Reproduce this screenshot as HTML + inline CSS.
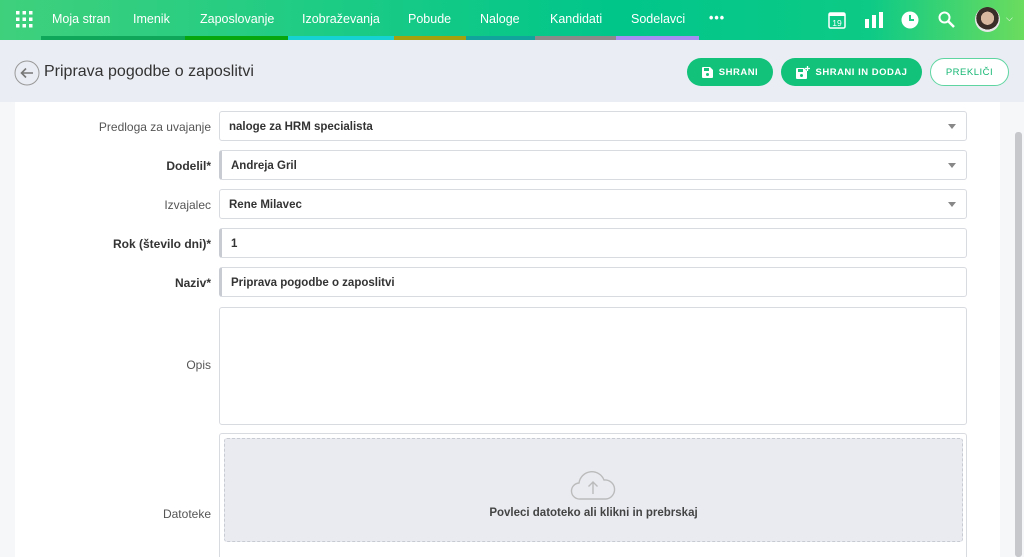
<!DOCTYPE html>
<html style="width:1024px;height:557px;overflow:hidden"><head><meta charset="utf-8"><style>
*{box-sizing:border-box;margin:0;padding:0}
body{width:1024px;height:557px;overflow:hidden;font-family:"Liberation Sans",sans-serif;background:#f6f7f9;position:relative}
.hdr{position:absolute;left:0;top:0;width:1024px;height:40px;background:linear-gradient(90deg,#3fd07c 0%,#1fcc84 30%,#00c68a 60%,#0dca86 85%,#6bdc5e 100%)}
.nav{position:absolute;top:12px;color:#fff;font-size:12.5px}
.ul{position:absolute;top:36px;height:4px}
.sub{position:absolute;left:0;top:40px;width:1024px;height:62px;background:#eaedf3}
.btn{position:absolute;top:58px;height:28px;border-radius:14px;background:#12c27a;color:#fff;font-size:9.5px;font-weight:bold;letter-spacing:.5px;display:flex;align-items:center;justify-content:center}
.main{position:absolute;left:15px;top:102px;width:985px;height:455px;background:#fff}
.lbl{position:absolute;right:813px;font-size:12px;color:#555;text-align:right}
.b{font-weight:bold;color:#333}
.fld{position:absolute;left:219px;width:748px;height:30px;border:1px solid #d8dbe0;border-radius:3px;font-size:11.5px;font-weight:bold;color:#333;padding:9px 9px 0}
.req{border-left:3px solid #c8ccd2}
.arr{position:absolute;right:10px;top:12px;width:0;height:0;border-left:4px solid transparent;border-right:4px solid transparent;border-top:5px solid #888}
</style></head><body>
<div class="hdr"></div>
<svg style="position:absolute;left:16px;top:11px" width="17" height="17"><g fill="#fff"><rect x="0" y="0" width="3.5" height="3.5"/><rect x="6.5" y="0" width="3.5" height="3.5"/><rect x="13" y="0" width="3.5" height="3.5"/><rect x="0" y="6.5" width="3.5" height="3.5"/><rect x="6.5" y="6.5" width="3.5" height="3.5"/><rect x="13" y="6.5" width="3.5" height="3.5"/><rect x="0" y="13" width="3.5" height="3.5"/><rect x="6.5" y="13" width="3.5" height="3.5"/><rect x="13" y="13" width="3.5" height="3.5"/></g></svg>
<div class="nav" style="left:52px">Moja stran</div>
<div class="nav" style="left:133px">Imenik</div>
<div class="nav" style="left:200px">Zaposlovanje</div>
<div class="nav" style="left:302px">Izobraževanja</div>
<div class="nav" style="left:408px">Pobude</div>
<div class="nav" style="left:480px">Naloge</div>
<div class="nav" style="left:550px">Kandidati</div>
<div class="nav" style="left:631px">Sodelavci</div>
<div class="nav" style="left:709px;top:11px;font-weight:bold;letter-spacing:1px">•••</div>
<div class="ul" style="left:41px;width:144px;background:#0fa85a"></div>
<div class="ul" style="left:185px;width:103px;background:#08a60e"></div>
<div class="ul" style="left:288px;width:106px;background:#17d2d2"></div>
<div class="ul" style="left:394px;width:72px;background:#a3a20e"></div>
<div class="ul" style="left:466px;width:69px;background:#10a49c"></div>
<div class="ul" style="left:535px;width:81px;background:#8a8a8a"></div>
<div class="ul" style="left:616px;width:83px;background:#a58ff5"></div>
<svg style="position:absolute;left:828px;top:11px" width="18" height="18"><rect x="1" y="2" width="16" height="15" rx="1.5" fill="none" stroke="#fff" stroke-width="1.5"/><rect x="1" y="2" width="16" height="3" fill="#fff"/><text x="9" y="15" font-size="8.5" fill="#fff" text-anchor="middle" font-family="Liberation Sans">19</text></svg>
<svg style="position:absolute;left:865px;top:12px" width="18" height="16"><g fill="#fff"><rect x="0" y="7" width="4" height="9"/><rect x="7" y="3" width="4" height="13"/><rect x="14" y="0" width="4" height="16"/></g></svg>
<svg style="position:absolute;left:901px;top:11px" width="18" height="18"><circle cx="9" cy="9" r="8.5" fill="#fff"/><path d="M9 4v5h4" stroke="#1fcc84" stroke-width="2" fill="none"/></svg>
<svg style="position:absolute;left:938px;top:11px" width="17" height="17"><circle cx="6.5" cy="6.5" r="5" stroke="#fff" stroke-width="2" fill="none"/><path d="M10 10l6 6" stroke="#fff" stroke-width="2.5"/></svg>
<div style="position:absolute;left:975px;top:7px;width:25px;height:25px;border-radius:50%;background:radial-gradient(circle at 50% 45%,#d9b8a0 0 35%,#3a2e28 36% 60%,#e8e8e8 61%)"></div>
<div style="position:absolute;left:1006px;top:13px;color:#fff;font-size:9px">⌵</div>
<div class="sub"></div>
<svg style="position:absolute;left:14px;top:60px" width="26" height="26"><circle cx="13" cy="13" r="12" fill="none" stroke="#999" stroke-width="1"/><path d="M19 13H8M12 8.5L7.5 13l4.5 4.5" stroke="#777" stroke-width="1.6" fill="none"/></svg>
<div style="position:absolute;left:44px;top:63px;font-size:16px;color:#333">Priprava pogodbe o zaposlitvi</div>
<div class="btn" style="left:687px;width:86px"><svg width="11" height="11" style="margin-right:6px"><path d="M0 1a1 1 0 011-1h7l3 3v7a1 1 0 01-1 1H1a1 1 0 01-1-1z" fill="#fff"/><rect x="2" y="1" width="5" height="3" fill="#12c27a"/><circle cx="5.5" cy="7.5" r="1.5" fill="#12c27a"/></svg>SHRANI</div>
<div class="btn" style="left:781px;width:141px"><svg width="14" height="13" style="margin-right:6px"><path d="M0 3a1 1 0 011-1h7l3 3v7a1 1 0 01-1 1H1a1 1 0 01-1-1z" fill="#fff"/><rect x="2" y="3" width="5" height="3" fill="#12c27a"/><circle cx="5.5" cy="9.5" r="1.5" fill="#12c27a"/><path d="M11.5 0v5M9 2.5h5" stroke="#fff" stroke-width="1.3"/></svg>SHRANI IN DODAJ</div>
<div class="btn" style="left:930px;width:79px;background:#fff;border:1.5px solid #5fd6a2;color:#17b774;font-weight:normal">PREKLIČI</div>
<div class="main"></div>
<div style="position:absolute;left:1015px;top:132px;width:7px;height:425px;background:#c6c8cc;border-radius:3px"></div>
<div class="lbl" style="top:120px">Predloga za uvajanje</div>
<div class="lbl b" style="top:159px">Dodelil*</div>
<div class="lbl" style="top:198px">Izvajalec</div>
<div class="lbl b" style="top:237px">Rok (število dni)*</div>
<div class="lbl b" style="top:276px">Naziv*</div>
<div class="lbl" style="top:358px">Opis</div>
<div class="lbl" style="top:507px">Datoteke</div>
<div class="fld" style="top:111px">naloge za HRM specialista<div class="arr"></div></div>
<div class="fld req" style="top:150px">Andreja Gril<div class="arr"></div></div>
<div class="fld" style="top:189px">Rene Milavec<div class="arr"></div></div>
<div class="fld req" style="top:228px">1</div>
<div class="fld req" style="top:267px">Priprava pogodbe o zaposlitvi</div>
<div class="fld" style="top:307px;height:118px"></div>
<div class="fld" style="top:433px;height:124px;border-bottom:none;border-radius:3px 3px 0 0"></div>
<div style="position:absolute;left:224px;top:438px;width:739px;height:104px;background:#e9ebf1;border:1px dashed #c8cbd2;border-radius:3px"></div>
<svg style="position:absolute;left:570px;top:467px" width="46" height="34"><path d="M10 32a8 8 0 01-1-16 13 13 0 0125-3 9 9 0 012 19z" fill="none" stroke="#bbb" stroke-width="1.4"/><path d="M23 27V15M18.5 19.5L23 15l4.5 4.5" stroke="#bbb" stroke-width="1.4" fill="none"/></svg>
<div style="position:absolute;left:224px;top:507px;width:739px;text-align:center;font-size:11.5px;font-weight:bold;color:#444">Povleci datoteko ali klikni in prebrskaj</div>
</body></html>
